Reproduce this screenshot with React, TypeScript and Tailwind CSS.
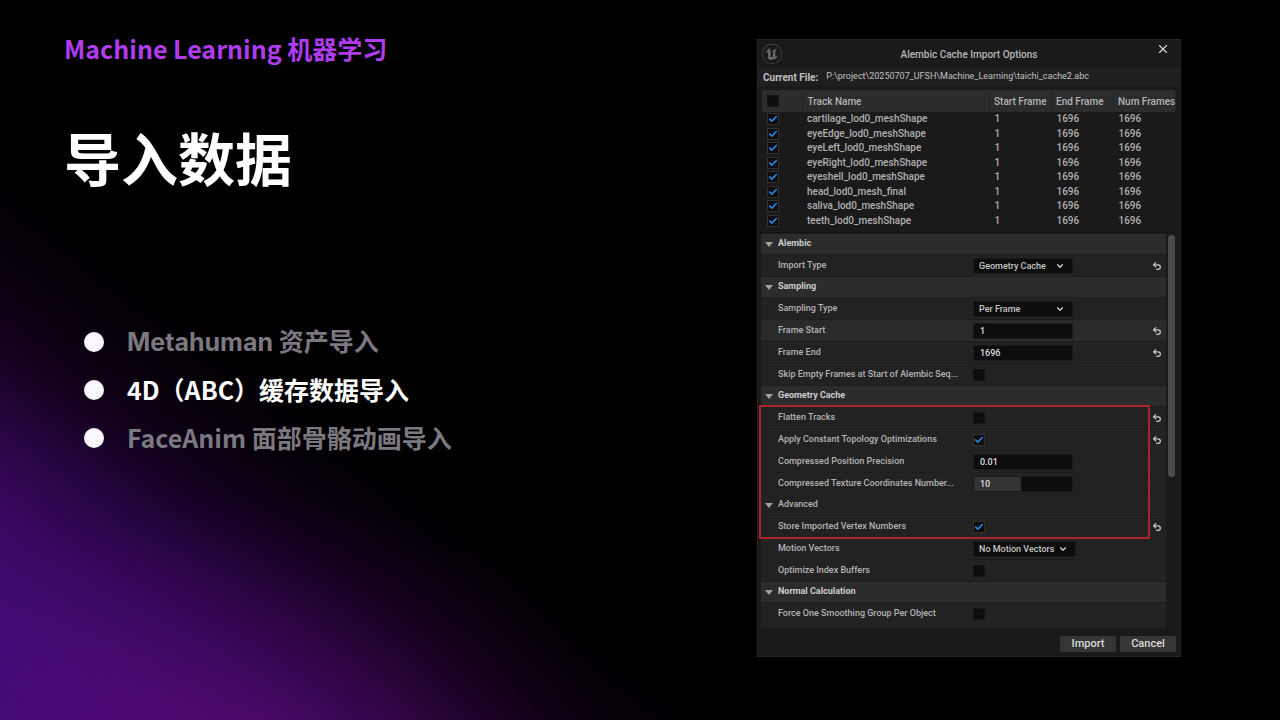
import React from 'react';
import { Check, ChevronDown, Undo2, X } from 'lucide-react';
import { SiUnrealengine } from 'react-icons/si';

const TOPICS = [
  { latin: 'Metahuman', label: ' 资产导入', active: false, inter: true },
  { latin: '4D', label: '（ABC）缓存数据导入', active: true, inter: false },
  { latin: 'FaceAnim', label: ' 面部骨骼动画导入', active: false, inter: false },
];

const TRACKS = [
  'cartilage_lod0_meshShape',
  'eyeEdge_lod0_meshShape',
  'eyeLeft_lod0_meshShape',
  'eyeRight_lod0_meshShape',
  'eyeshell_lod0_meshShape',
  'head_lod0_mesh_final',
  'saliva_lod0_meshShape',
  'teeth_lod0_meshShape',
];

function Tick({ id, label, checked = false }: { id?: string; label?: string; checked?: boolean }) {
  return (
    <span className="relative block size-3">
      <input
        id={id}
        type="checkbox"
        aria-label={label}
        defaultChecked={checked}
        className="peer block size-3 appearance-none bg-[#0d0d0d] border border-[#151515] checked:border-[#303030]"
      />
      <Check
        className="hidden peer-checked:block absolute inset-px size-2.5 text-[#2187e8] pointer-events-none"
        strokeWidth={4}
      />
    </span>
  );
}

function Select({ id, value, width = 'w-[100px]' }: { id: string; value: string; width?: string }) {
  return (
    <span className={`relative block ${width}`}>
      <select
        id={id}
        defaultValue={value}
        className="block w-full h-4 appearance-none bg-[#0d0d0d] border border-[#191919] pl-[5px] text-[9px] leading-3 font-medium text-[#c4c4c4]"
      >
        <option>{value}</option>
      </select>
      <ChevronDown
        className="absolute right-2 top-[3px] size-2.5 text-[#d0d0d0] pointer-events-none"
        strokeWidth={3}
      />
    </span>
  );
}

function NumberBox({ id, value, filled = false }: { id: string; value: string; filled?: boolean }) {
  return (
    <input
      id={id}
      type="text"
      inputMode="decimal"
      defaultValue={value}
      className={`block w-[100px] h-4 border border-[#1a1a1a] pl-[6px] text-[9px] font-medium text-[#dcdcdc] ${
        filled ? 'bg-[linear-gradient(to_right,#333333_48%,#0d0d0d_48%)]' : 'bg-[#0d0d0d]'
      }`}
    />
  );
}

function GroupHeader({ children, sub = false }: { children: string; sub?: boolean }) {
  return (
    <button
      type="button"
      aria-expanded="true"
      className={`flex w-full h-[21px] items-center gap-[5px] pl-1 text-left text-[9px] border-t border-[#1d1d1d] ${
        sub ? 'font-medium text-[#b4b4b4]' : 'font-bold text-[#cccccc] bg-[#2c2c2c]'
      }`}
    >
      <svg viewBox="0 0 8 5" className="w-2 h-[5px] shrink-0" fill="#a0a0a0">
        <path d="M0 0h8L4 5z" />
      </svg>
      {children}
    </button>
  );
}

interface OptionRowProps {
  id: string;
  label: string;
  reset?: boolean;
  highlight?: boolean;
  children: React.ReactNode;
}

function OptionRow({ id, label, reset, highlight, children }: OptionRowProps) {
  return (
    <div
      className={`flex h-[22px] items-center pl-[17px] pr-1 border-t border-[#1d1d1d] ${
        highlight ? 'bg-[#2a2a2a]' : ''
      }`}
    >
      <label htmlFor={id} className="w-[195px] shrink-0 truncate text-[9px] font-medium text-[#b4b4b4]">
        {label}
      </label>
      <div className="flex-1">{children}</div>
      {reset && (
        <button type="button" aria-label={`Reset ${label}`} className="text-[#c8c8c8]">
          <Undo2 className="size-2.5" strokeWidth={3} />
        </button>
      )}
    </div>
  );
}

function TrackTable() {
  return (
    <div className="mx-1 pb-1">
      <table className="w-full table-fixed border-collapse text-[10px] font-medium text-left">
        <thead>
          <tr className="h-[22px] bg-[#2c2c2c] text-[#b4b4b4] [&>th]:border-r [&>th]:border-[#242424] [&>th]:p-0 [&>th]:font-medium [&>th]:whitespace-nowrap">
            <th className="w-10">
              <div className="pl-[5px]">
                <Tick label="Select all tracks" />
              </div>
            </th>
            <th>
              <span className="pl-[5px]">Track Name</span>
            </th>
            <th className="w-[62px]">
              <span className="pl-1">Start Frame</span>
            </th>
            <th className="w-[62px]">
              <span className="pl-1">End Frame</span>
            </th>
            <th className="w-[62px]">
              <span className="pl-1">Num Frames</span>
            </th>
          </tr>
        </thead>
        <tbody className="text-[#b0b0b0]">
          {TRACKS.map((track) => (
            <tr key={track} className="odd:h-[14px] even:h-[15px] leading-[14px] [&>td]:py-0 [&>td]:pr-0 [&>td]:pl-[5px]">
              <td>
                <Tick label={track} checked />
              </td>
              <td>{track}</td>
              <td>1</td>
              <td>1696</td>
              <td>1696</td>
            </tr>
          ))}
        </tbody>
      </table>
    </div>
  );
}

function ImportDialog() {
  return (
    <section
      role="dialog"
      aria-labelledby="dialog-title"
      className="w-full bg-[#1a1a1a] border border-[#262626] font-[Roboto,sans-serif]"
    >
      <header className="grid grid-cols-[24px_1fr_24px] items-center h-[28px] px-1">
        <SiUnrealengine className="size-5 text-[#6c6c6c]" />
        <h2 id="dialog-title" className="text-center text-[10px] font-medium text-[#b8b8b8]">
          Alembic Cache Import Options
        </h2>
        <button type="button" aria-label="Close" className="self-start pt-0.5 pl-1 text-[#d8d8d8]">
          <X className="size-3.5" strokeWidth={2} />
        </button>
      </header>

      <div className="flex items-center gap-2 h-[18px] px-[5px] mb-1 bg-[#1f1f1f] text-[#c0c0c0] whitespace-nowrap">
        <strong className="text-[10px] font-bold">Current File:</strong>
        <span className="text-[9px]">P:\project\20250707_UFSH\Machine_Learning\taichi_cache2.abc</span>
      </div>

      <TrackTable />

      <div className="flex gap-[2px] pl-[3px] pr-[5px] border-t border-[#121212]">
        <div className="flex-1 min-w-0 bg-[#222222] pb-1">
          <GroupHeader>Alembic</GroupHeader>
          <OptionRow id="import-type" label="Import Type" reset>
            <Select id="import-type" value="Geometry Cache" />
          </OptionRow>

          <GroupHeader>Sampling</GroupHeader>
          <OptionRow id="sampling-type" label="Sampling Type">
            <Select id="sampling-type" value="Per Frame" />
          </OptionRow>
          <OptionRow id="frame-start" label="Frame Start" reset highlight>
            <NumberBox id="frame-start" value="1" />
          </OptionRow>
          <OptionRow id="frame-end" label="Frame End" reset>
            <NumberBox id="frame-end" value="1696" />
          </OptionRow>
          <OptionRow id="skip-empty" label="Skip Empty Frames at Start of Alembic Seq...">
            <Tick id="skip-empty" />
          </OptionRow>

          <GroupHeader>Geometry Cache</GroupHeader>
          <div className="relative">
            <OptionRow id="flatten" label="Flatten Tracks" reset>
              <Tick id="flatten" />
            </OptionRow>
            <OptionRow id="topology" label="Apply Constant Topology Optimizations" reset>
              <Tick id="topology" checked />
            </OptionRow>
            <OptionRow id="precision" label="Compressed Position Precision">
              <NumberBox id="precision" value="0.01" />
            </OptionRow>
            <OptionRow id="uv-bits" label="Compressed Texture Coordinates Number...">
              <NumberBox id="uv-bits" value="10" filled />
            </OptionRow>
            <GroupHeader sub>Advanced</GroupHeader>
            <OptionRow id="vertex-numbers" label="Store Imported Vertex Numbers" reset>
              <Tick id="vertex-numbers" checked />
            </OptionRow>
            <div className="absolute -top-px -bottom-0.5 -left-0.5 right-4 border-2 border-[#a82626] pointer-events-none" />
          </div>
          <OptionRow id="motion-vectors" label="Motion Vectors">
            <Select id="motion-vectors" value="No Motion Vectors" width="w-[103px]" />
          </OptionRow>
          <OptionRow id="index-buffers" label="Optimize Index Buffers">
            <Tick id="index-buffers" />
          </OptionRow>

          <GroupHeader>Normal Calculation</GroupHeader>
          <OptionRow id="smoothing" label="Force One Smoothing Group Per Object">
            <Tick id="smoothing" />
          </OptionRow>
        </div>
        <div className="w-[7px] pt-0.5">
          <div className="h-[242px] rounded-full bg-[#4c4c4c]" />
        </div>
      </div>

      <footer className="flex justify-end gap-1 px-1 pt-2 pb-1">
        <button type="button" className="w-14 h-4 rounded-xs bg-[#363636] text-[11px] leading-4 font-medium text-[#dcdcdc]">
          Import
        </button>
        <button type="button" className="w-14 h-4 rounded-xs bg-[#363636] text-[11px] leading-4 font-medium text-[#dcdcdc]">
          Cancel
        </button>
      </footer>
    </section>
  );
}

export default function App() {
  return (
    <main className="grid grid-cols-[minmax(0,1fr)_minmax(0,424px)] items-start min-h-screen pl-16 pr-[99px] bg-black bg-[radial-gradient(ellipse_at_20%_105%,rgba(110,10,120,0.3),transparent_24%),radial-gradient(ellipse_at_0%_90%,rgba(30,0,130,0.16),transparent_28%),linear-gradient(218deg,#000000_66%,#040006_71%,#0b0010_75%,#180224_79%,#280540_83%,#380858_87%,#430a68_91%,#480a70_95%,#460a72_100%)] font-['Noto_Sans_CJK_SC',sans-serif]">
      <section className="pt-[30px]">
        <p className="text-[25px] leading-9 font-bold text-[#b03cf0]">Machine Learning 机器学习</p>
        <h1 className="mt-[50px] text-[57px] leading-[80px] font-bold text-white">导入数据</h1>
        <ul className="mt-[132px] ml-5 flex flex-col gap-5">
          {TOPICS.map((topic) => (
            <li
              key={topic.latin}
              className={`flex h-7 items-center gap-[23px] text-[25px] leading-6 font-bold ${
                topic.active ? 'text-white' : 'text-[#7c7880]'
              }`}
            >
              <span className="size-5 rounded-full bg-[#fbf8ff]" />
              <span className="pb-0.5 whitespace-pre">
                <span className={topic.inter ? 'font-[Inter,sans-serif]' : ''}>{topic.latin}</span>
                {topic.label}
              </span>
            </li>
          ))}
        </ul>
      </section>

      <div className="pt-[39px] pb-8">
        <ImportDialog />
      </div>
    </main>
  );
}
